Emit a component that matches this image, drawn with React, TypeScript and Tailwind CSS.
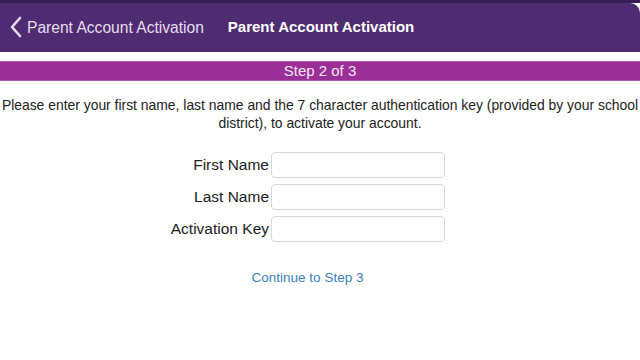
import React from "react";

export default function App() {
  const rows = ["First Name", "Last Name", "Activation Key"];
  return (
    <div className="w-[640px] h-[360px] bg-white overflow-hidden" style={{ fontFamily: '"Liberation Sans", Arial, sans-serif' }}>
      <div className="h-[3px] bg-[#3a1f56]" />
      <div className="h-[49px] bg-[#4f2c72] rounded-tr-[10px] flex items-center">
        <div className="flex items-center pl-[10px] text-[#e6ddf0] text-[15.6px]">
          <svg width="12" height="22" viewBox="0 0 12 22" className="mr-[5px]">
            <path d="M10 2 L2 11 L10 20" fill="none" stroke="#e6ddf0" strokeWidth="2.6" strokeLinecap="round" strokeLinejoin="round" />
          </svg>
          <span>Parent Account Activation</span>
        </div>
        <div className="ml-[24px] text-white text-[15px] font-bold">Parent Account Activation</div>
      </div>
      <div className="h-[9px] bg-white" />
      <div className="h-[20px] bg-[#9c2f97] border-y border-[#b35aae] flex items-center justify-center text-[#f6e6f4] text-[15px]">
        Step 2 of 3
      </div>
      <p className="mt-[15px] text-center text-[13.9px] leading-[18px] text-[#222]">
        Please enter your first name, last name and the 7 character authentication key (provided by your school district), to activate your account.
      </p>
      <div className="mt-[20px] flex flex-col gap-[6px]">
        {rows.map((r) => (
          <div key={r} className="flex items-center h-[26px]">
            <div className="w-[271px] text-right pr-[2px] text-[15.5px] text-[#222]">{r}</div>
            <div className="w-[174px] h-[26px] border border-[#d6d6d6] rounded-[4px] bg-white" />
          </div>
        ))}
      </div>
      <div className="mt-[26px] text-center pr-[25px] text-[13.5px] text-[#3a7fc1]">Continue to Step 3</div>
    </div>
  );
}
